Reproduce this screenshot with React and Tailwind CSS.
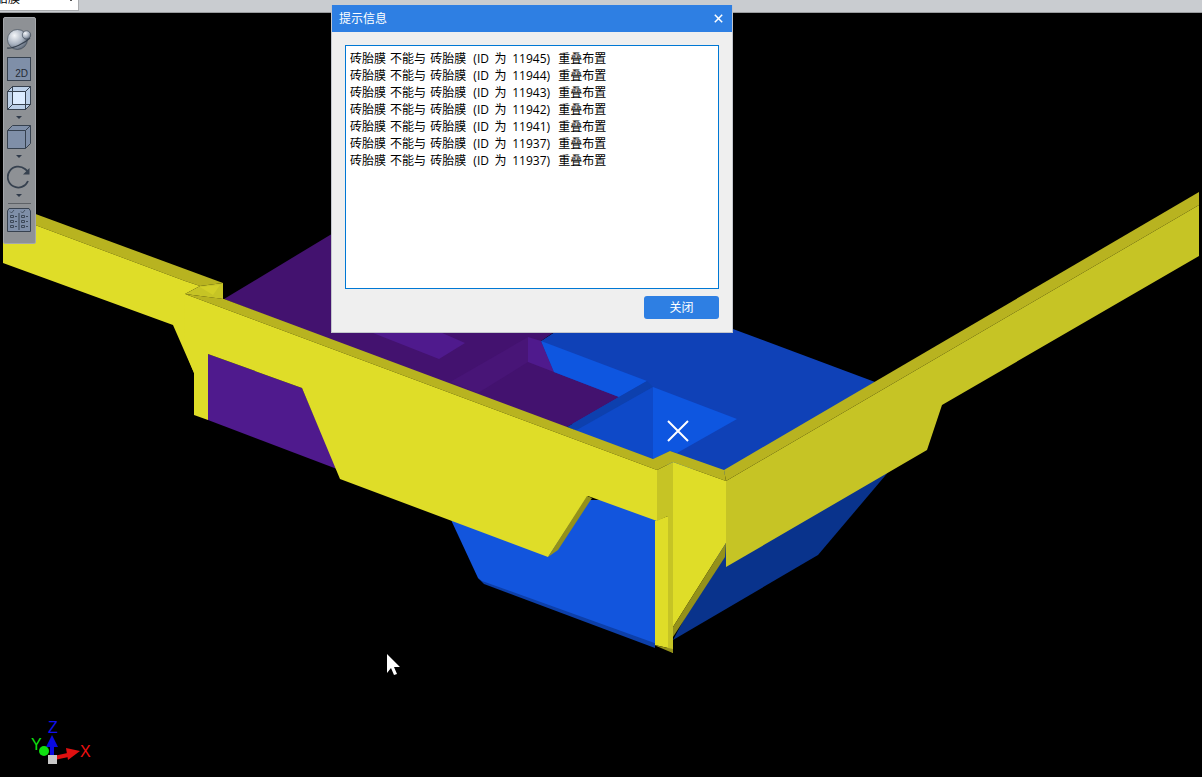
const CJK = 'font-["Open_Sans","Noto_Sans_CJK_SC",sans-serif]';
const AXIS = "font-['Liberation_Sans',sans-serif] text-[16px]";

const messages = [11945, 11944, 11943, 11942, 11941, 11937, 11937];

const PURPLE_DARK = '#43126f';
const PURPLE = '#4f1a8d';
const BLUE_FLOOR = '#0f41b7';
const BLUE = '#1255dd';
const BLUE_FACE = '#0e56e0';
const BRIGHT = '#dfdd28';
const STRIP = '#b8b320';
const SHADE = '#c6c425';
const OLIVE = '#94911a';

// painted back to front, in page coordinates
const faces = [
  [BLUE_FLOOR, '541,341 620,290 733,329 875,382 724,475 653,462 575,431'],
  [PURPLE_DARK, '224,299 340,229 600,300 541,341 554,372 619,397 567,427 600,445 224,299'],
  ['#481577', '450,382 528,337 528,362 478,393'],
  [PURPLE, '373,333 440,332 465,343 439,359'],
  [PURPLE, '528,337 541,341 554,372 528,362'],
  [BLUE_FACE, '541,341 647,381 619,397 554,372'],
  ['#0d40ae', '647,381 653,387 577,431 567,427 619,397'],
  ['#0e49c8', '653,387 653,459 575,431'],
  [BLUE_FACE, '653,387 737,419 677,453 670,451 653,459'],
  ['#09338c', '726,540 890,470 818,555 673,640'],
  [PURPLE, '208,354 302,388 337,469 208,420'],
  ['#0d3fa8', '478,578 484,584 655,648 655,640'],
  [BLUE, '445,500 660,500 660,645 482,581 478,578 452,522'],
  [STRIP, '3,202 223,283 200,286 185,281 3,213'],
  [BRIGHT, '3,213 185,281 200,286 185,294 190,300 194,373 173,325 3,263'],
  [SHADE, '185,294 200,286 223,283 223,299'],
  ['#d2cf27', '200,287 220,285 213,295'],
  [STRIP, '185,294 224,299 653,459 670,451 724,470 726,481 673,462 657,470'],
  [BRIGHT, '185,294 657,470 657,521 588,496 548,557 340,479 302,388 208,354 208,420 194,415 194,373 184,348'],
  [OLIVE, '587,496 592,498 558,550 548,557'],
  [BRIGHT, '655,521 668,516 668,648 655,645'],
  [SHADE, '657,470 673,462 673,653 668,650 668,516 657,521'],
  [OLIVE, '654,645 668,648 673,649 673,653 668,651'],
  [BRIGHT, '673,462 726,481 726,543 673,627'],
  [OLIVE, '726,543 725,557 673,637 673,627'],
  [SHADE, '726,481 1199,205 1199,256 942,405 927,450 726,567'],
  [STRIP, '724,470 1199,192 1199,205 726,481'],
];

function Scene() {
  return (
    <svg viewBox="0 13 1202 764" className="block h-full w-full">
      {faces.map(([fill, points], i) => (
        <polygon key={i} fill={fill} points={points} />
      ))}
      <path d="M668 421 688 441M688 421 668 441" stroke="#fff" strokeWidth="2" />

      {/* axis triad */}
      <path d="M52 758 52 745" stroke="#0a0ae0" strokeWidth="4" />
      <polygon points="52,735 58,747 46,747" fill="#0a0ae0" />
      <path d="M54 758 68 755" stroke="#e01010" strokeWidth="4" />
      <polygon points="80,751 66,748 68,760" fill="#e01010" />
      <circle cx="44" cy="751" r="5" fill="#10e010" />
      <rect x="48" y="755" width="9" height="9" fill="#c8c8c8" />
      <text x="48" y="733" fill="#1010f0" className={AXIS}>Z</text>
      <text x="31" y="750" fill="#10e010" className={AXIS}>Y</text>
      <text x="80" y="757" fill="#f01010" className={AXIS}>X</text>

      {/* mouse pointer */}
      <polygon points="387,654 400,667 394,667 397,674 394,675 391,668 387,673" fill="#fff" />
    </svg>
  );
}

function Caret() {
  return <div className="h-0 w-0 border-x-[3px] border-t-[3px] border-x-transparent border-t-[#2f3a4a]" />;
}

function Toolbar() {
  const line = '#36414f';
  const fill = '#7f8fa8';
  return (
    <div className="absolute left-[3px] top-[17px] flex h-[227px] w-[33px] flex-col items-center rounded-[2px] border border-[#a5a8ac] bg-[#8e9195] pr-px pt-[10px]">
      <svg width="26" height="24" viewBox="0 0 26 24">
        <defs>
          <radialGradient id="ball" cx="0.35" cy="0.3" r="0.8">
            <stop offset="0" stopColor="#f4f6f9" />
            <stop offset="0.55" stopColor="#a8b2c0" />
            <stop offset="1" stopColor="#4d5867" />
          </radialGradient>
        </defs>
        <circle cx="11.5" cy="11.5" r="10" fill="url(#ball)" stroke={line} strokeWidth="0.6" />
        <path d="M1 20C7 21 19 15 24 10" fill="none" stroke={line} strokeWidth="1.2" />
        <circle cx="20.5" cy="7" r="4.2" fill="url(#ball)" stroke={line} strokeWidth="0.6" />
      </svg>
      <div className="mt-[5px] flex h-[24px] w-[24px] items-end justify-end border border-[#36414f] bg-[#7f8fa8] pr-[2px] text-[10px] leading-[12px] text-[#222a35] font-['Liberation_Sans',sans-serif]">
        2D
      </div>
      <svg width="24" height="24" viewBox="0 0 24 24" className="mt-[5px]" fill="none" stroke={line}>
        <path d="M0.5 5.5 5.5 0.5H23.5V18.5L18.5 23.5H0.5Z" fill="#bcd0e8" />
        <rect x="5.5" y="5.5" width="13" height="13" fill="#dcecff" stroke="none" />
        <rect x="0.5" y="5.5" width="18" height="18" />
        <rect x="5.5" y="0.5" width="18" height="18" />
        <path d="M18.5 5.5 23.5 0.5M.5 23.5 5.5 18.5" />
      </svg>
      <div className="mt-[6px]"><Caret /></div>
      <svg width="24" height="24" viewBox="0 0 24 24" className="mt-[6px]" stroke={line}>
        <path d="M0.5 5.5 5.5 0.5H23.5V18.5L18.5 23.5H0.5Z" fill={fill} />
        <path d="M0.5 5.5H18.5V23.5M18.5 5.5 23.5 0.5" fill="none" />
      </svg>
      <div className="mt-[6px]"><Caret /></div>
      <svg width="24" height="24" viewBox="0 0 24 24" className="mt-[7px]" fill="none">
        <path d="M21 16A10.5 10.5 0 1 1 18 4L21.5 7" stroke={line} strokeWidth="1.8" />
        <polygon points="22.5,3 22.5,9.5 16,9.5" fill={line} />
      </svg>
      <div className="mt-[5px]"><Caret /></div>
      <div className="mt-[6px] h-px w-[23px] bg-[#5d6166]" />
      <svg width="24" height="24" viewBox="0 0 24 24" className="mt-[4px]" stroke={line} fill="none">
        <path d="M.5 3 2 .5H22L23.5 3V23.5H.5Z" fill={fill} />
        <path d="M12 5V22" />
        <path d="M3 3.5 4.5 5 7 2M14 3.5 15.5 5 18 2" strokeWidth="0.8" />
        <path d="M3.5 7.5h3v2h-3zM3.5 12.5h3v2h-3zM3.5 17.5h3v2h-3zM14.5 7.5h3v2h-3zM14.5 12.5h3v2h-3zM14.5 17.5h3v2h-3zM8 8.5h2M8 13.5h2M8 18.5h2M19 8.5h2M19 13.5h2M19 18.5h2" strokeWidth="0.9" />
      </svg>
    </div>
  );
}

function MessageDialog() {
  return (
    <div className={`absolute left-[331px] top-[5px] flex h-[328px] w-[402px] flex-col border border-t-0 border-[#c3c6cc] bg-[#efefef] ${CJK}`}>
      <div className="flex h-[27px] shrink-0 items-center justify-between bg-[#2e7fe3] pl-[7px] pr-[9px] text-[12px] text-white">
        <span>提示信息</span>
        <svg width="9" height="9" viewBox="0 0 9 9">
          <path d="M.8.8 8.2 8.2M8.2.8.8 8.2" stroke="#fff" strokeWidth="1.5" />
        </svg>
      </div>
      <div className="mx-[13px] mt-[13px] h-[244px] border border-[#0078d4] bg-white px-[4px] pt-[4px] text-[12px] leading-[17px] text-black [word-spacing:1px]">
        {messages.map((id, i) => (
          <div key={i} className="whitespace-pre">
            砖胎膜 不能与 砖胎膜 <span className="ml-[3px] mr-[4px] [word-spacing:2.5px]">(ID 为 {id})</span> 重叠布置
          </div>
        ))}
      </div>
      <div className="mr-[13px] mt-[7px] flex justify-end">
        <button type="button" className="h-[23px] w-[75px] rounded-[3px] bg-[#2e7fe3] text-[12px] text-white">
          关闭
        </button>
      </div>
    </div>
  );
}

export default function App() {
  return (
    <div className="relative flex h-[777px] w-[1202px] flex-col overflow-hidden bg-black">
      <div className="flex h-[13px] shrink-0 items-start border-b border-[#9a9c9f] bg-[#c9ccd0]">
        <div className={`relative h-[11px] w-[79px] overflow-hidden border-r border-b border-[#a9abae] bg-white text-[12px] leading-[12px] text-black ${CJK}`}>
          <div className="-ml-[16px] -mt-[7px] whitespace-pre">砖胎膜</div>
          <div className="absolute right-[6px] top-0 h-px w-[2px] bg-[#555]" />
        </div>
      </div>
      <div className="min-h-0 flex-1">
        <Scene />
      </div>
      <Toolbar />
      <MessageDialog />
    </div>
  );
}
